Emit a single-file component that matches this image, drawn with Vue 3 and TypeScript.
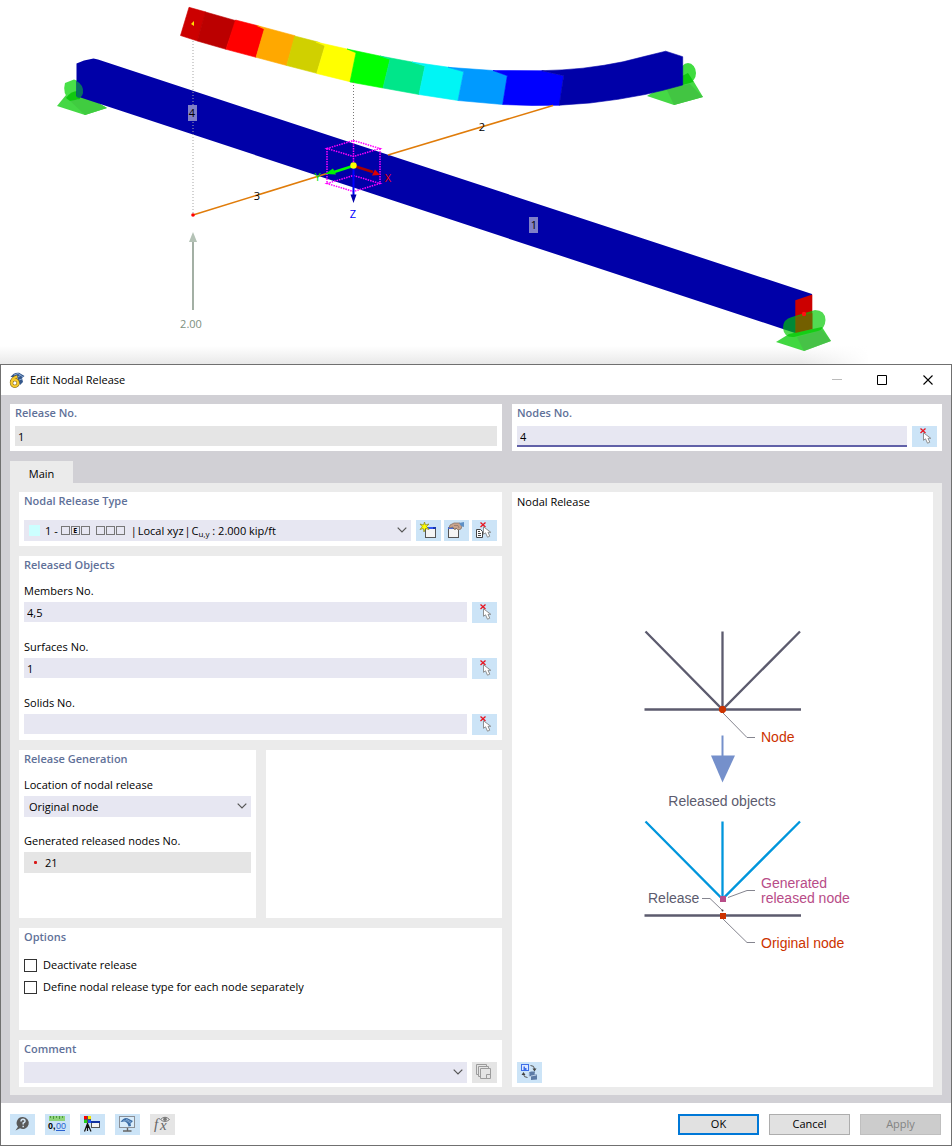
<script setup lang="ts">
import { ref } from 'vue'

interface ObjectField {
  id: string
  label: string
  value: string
}

interface Option {
  id: string
  label: string
  checked: boolean
}

interface BeamSegment {
  color: string
  points: string
}

const releaseNo = ref('1')
const nodesNo = ref('4')
const generatedNo = ref('21')

const objectFields = ref<ObjectField[]>([
  { id: 'members', label: 'Members No.', value: '4,5' },
  { id: 'surfaces', label: 'Surfaces No.', value: '1' },
  { id: 'solids', label: 'Solids No.', value: '' },
])

const options = ref<Option[]>([
  { id: 'deactivate', label: 'Deactivate release', checked: false },
  { id: 'separate', label: 'Define nodal release type for each node separately', checked: false },
])

const segments: BeamSegment[] = [
  { color: '#cc0000', points: '189,7.3 206,12 197.5,41 180.5,35.5' },
  { color: '#bb0000', points: '205.5,12 236,20.7 226,49.3 197.3,41' },
  { color: '#ff0000', points: '235.5,20 257,25.5 264.5,29 256,57.3 226,49.3' },
  { color: '#ffa800', points: '257,25.5 295,35.7 295,37 286.7,65.5 256,57.3 264.3,29' },
  { color: '#d0d000', points: '294.7,36 318,42 325,45.7 316.7,73.3 286.7,65.5' },
  { color: '#ffff00', points: '316,42 347,49 356,52.7 350,81.7 316.7,73.5 325,45.7' },
  { color: '#00ff00', points: '347,49 380,56 390,59.3 383,88 350,82 356,52.7' },
  { color: '#00e68a', points: '380,56 412,62 425,66 419,94.5 383,88 390,59.3' },
  { color: '#00f5f5', points: '412,62 449,67.3 463.7,71.7 458,100.5 419,94.5 425,66' },
  { color: '#009aff', points: '448,67.3 493,70.5 507.3,75.7 502.7,104.5 458,100.5 463.7,71.7' },
  { color: '#0000ff', points: '493,70.5 541.7,70.7 563.7,75.7 559.5,105.3 532,105.5 502.7,104.5 507.3,75.7' },
  {
    color: '#0000a8',
    points: '541.7,70.7 562,69.9 583,68.2 604,65.3 623,61.8 645,56.3 665.7,51.2 682.7,56.7 682.7,85 663,90.3 645,94.5 618,99.3 590,103 559.3,105.2 563.7,75.7',
  },
]
</script>

<template>
  <main class="screen">
    <svg class="scene" viewBox="0 0 952 364" role="img" aria-label="Deformed beam model">
      <defs>
        <linearGradient id="shade" x1="0" y1="0" x2="0" y2="1">
          <stop offset="0" stop-color="#fff" />
          <stop offset="1" stop-color="#e9e9e9" />
        </linearGradient>
        <linearGradient id="shadeEdge" x1="0" y1="0" x2="1" y2="0">
          <stop offset="0" stop-color="#fff" stop-opacity="0" />
          <stop offset="1" stop-color="#fff" />
        </linearGradient>
      </defs>
      <rect x="0" y="346" width="868" height="18" fill="url(#shade)" />
      <rect x="800" y="346" width="70" height="18" fill="url(#shadeEdge)" />

      <g>
        <path d="M57 106 66 95 80 92 107 108 85 115Z" fill="#45d845" />
        <path d="M66 97 80 92 107 108 85 115Z" fill="#40cc40" />
        <path d="M65 83 74 79.500 78 81V100L70 100Q62 94 65 83Z" fill="#48e048" />
        <path d="M66 98Q71 90 80 91V99L70 101Z" fill="#10c810" />
      </g>
      <g>
        <path d="M647 96 666 84 694 82 703 97 674 105Z" fill="#45d845" />
        <path d="M666 88 690 84 703 97 674 105Z" fill="#42c542" />
        <ellipse cx="688" cy="73" rx="8" ry="10" fill="#40dc40" />
        <path d="M682 76 688 73 694 82 682 85Z" fill="#0fc80f" />
      </g>

      <polygon points="76.500,63.500 84,60.500 93.500,58.500 98,59.500 812,294 812,325 795,333 783,329 82,98 76.500,96" fill="#0000a8" />
      <path d="M76.500 81Q84 85 83 93 82 97 79 98L76.500 97Z" fill="#087060" />
      <g stroke-width=".6" stroke-linejoin="round">
        <polygon
          v-for="segment in segments"
          :key="segment.color"
          :points="segment.points"
          :fill="segment.color"
          :stroke="segment.color"
        />
      </g>
      <path d="M191 24 194 21V26Z" fill="#ffdf00" />

      <polygon points="795.300,300.300 812.300,294.500 812.300,329 795.300,333" fill="#cc0000" />
      <g>
        <path d="M776 342 789 334 822 327 831 341 804 351Z" fill="#22d022" fill-opacity=".86" />
        <path d="M797 337 822 330 831 341 804 351Z" fill="#4abb4a" fill-opacity=".75" />
        <path d="M783 328Q783 319 792 317L815 310Q825 310 825.500 320 825 329 818 331L794 337Q784 338 783 328Z" fill="#00c800" fill-opacity=".68" />
        <path d="M795.500 317 812.500 313V329L795.500 333Z" fill="#954400" fill-opacity=".6" />
      </g>
      <circle cx="804" cy="314" r="2.200" fill="#ff1010" />

      <g class="dots">
        <path d="M193 41V215" stroke="#a5a5a5" />
        <path d="M353.500 82V141" stroke="#777" />
      </g>
      <g stroke="#e07c0a" stroke-width="1.600">
        <path d="M388 155 553 105.500" />
        <path d="M193 215 327 173.500" />
      </g>
      <circle cx="193" cy="215" r="1.800" fill="#f00" />

      <g class="box">
        <path d="M327 148.500 353.500 140.500 380 148.500 353.500 156.500ZM327 183.500 353.500 175.500 380 183.500 353.500 191.500Z" />
        <path d="M327 148.500V183.500M380 148.500V183.500M353.500 140.500V162" />
      </g>
      <g>
        <path d="M353 166 334 172" stroke="#0f0" stroke-width="2.500" />
        <path d="M325 174 333 168.500 336 174.500Z" fill="#00f000" />
        <path d="M354 166 373 172" stroke="#a80000" stroke-width="2.500" />
        <path d="M380 175 372 175.500 375 169.500Z" fill="#e00000" />
        <path d="M353.500 167V196" stroke="#0000ff" stroke-width="2" />
        <path d="M350.500 194.500H356.500L353.500 203Z" fill="#0000a8" />
        <circle cx="353.500" cy="165.500" r="3.200" fill="#ff0" />
      </g>
      <g class="scene-text" text-anchor="middle">
        <text x="317.500" y="181" fill="#00e000">Y</text>
        <text x="388" y="182" fill="#f00000">X</text>
        <text x="353" y="218" fill="#0000ff">Z</text>
        <rect x="188" y="105" width="9" height="16" fill="#8080c8" />
        <text x="192" y="117">4</text>
        <rect x="529" y="217" width="9" height="16" fill="#8080c8" />
        <text x="534" y="229">1</text>
        <text x="482" y="131">2</text>
        <text x="257" y="200">3</text>
        <text x="191" y="328" fill="#7d9080">2.00</text>
      </g>
      <path d="M193 310V240" stroke="#8c9c8e" stroke-width="1.600" />
      <path d="M189 242 193 232 197 242Z" fill="#b4c2b6" />
    </svg>

    <section class="dialog" role="dialog" aria-labelledby="dialog-title">
      <header class="titlebar">
        <svg width="16" height="16" viewBox="0 0 16 16" aria-hidden="true">
          <path d="M1.500 5Q5 0 10 .8L15.500 4 13 6 14 10 11 13 8 5Z" fill="#35588c" />
          <path d="M5 3 9 1.500 14 5M9 5 12 3M10 8 13 7" stroke="#86a5ce" fill="none" />
          <path d="M8.300 4.600Q3 5.800 2.400 10.800" fill="none" stroke="#7d651a" stroke-width="3.400" />
          <circle cx="5.800" cy="11" r="3.300" fill="none" stroke="#7d651a" stroke-width="3.200" />
          <path d="M8.300 4.600Q3 5.800 2.400 10.800" fill="none" stroke="#f6c92c" stroke-width="2" />
          <circle cx="5.800" cy="11" r="3.300" fill="none" stroke="#f6c92c" stroke-width="2.200" />
        </svg>
        <h1 id="dialog-title">Edit Nodal Release</h1>
        <div class="window-buttons">
          <button type="button" aria-label="Minimize" disabled>
            <svg width="11" height="11" viewBox="0 0 11 11"><path d="M1 4.500H11" stroke="#bbb" /></svg>
          </button>
          <button type="button" aria-label="Maximize">
            <svg width="11" height="11" viewBox="0 0 11 11"><path d="M.5.5H9.500V9.500H.5Z" fill="none" stroke="#000" /></svg>
          </button>
          <button type="button" aria-label="Close">
            <svg width="11" height="11" viewBox="0 0 11 11"><path d="M.5.5 9.500 9.500M9.500 .5.5 9.500" stroke="#000" stroke-width="1.100" /></svg>
          </button>
        </div>
      </header>

      <svg class="symbols" aria-hidden="true">
        <symbol id="pick" viewBox="0 0 25 21">
          <path d="M8.500 2.500 13.500 7M13.500 2.500 8.500 7" stroke="#e81420" stroke-width="1.300" />
          <path d="M11.500 6.800V14.300L13.500 12.800 15.500 17.200 17.800 16.200 16 12.300H18.800Z" fill="#fff" stroke="#858585" stroke-width=".9" />
        </symbol>
        <symbol id="chevron" viewBox="0 0 10 6">
          <path d="M.7.7 5 5 9.300.7" fill="none" stroke="#555" stroke-width="1.200" />
        </symbol>
      </svg>

      <div class="body">
        <div class="top-row">
          <section class="panel head-panel">
            <h2><label for="release-no">Release No.</label></h2>
            <div class="row"><input id="release-no" v-model="releaseNo" class="field readonly" readonly /></div>
          </section>
          <section class="panel head-panel">
            <h2><label for="nodes-no">Nodes No.</label></h2>
            <div class="row">
              <input id="nodes-no" v-model="nodesNo" class="field active" />
              <button type="button" class="tool" aria-label="Select nodes"><svg><use href="#pick" /></svg></button>
            </div>
          </section>
        </div>

        <div class="tabs" role="tablist">
          <button type="button" role="tab" aria-selected="true" class="tab">Main</button>
        </div>

        <div class="page" role="tabpanel">
          <div class="column">
            <section class="panel type-panel">
              <h2><label for="release-type">Nodal Release Type</label></h2>
              <div class="row">
                <div class="combo">
                  <select id="release-type" class="rich">
                    <option>1 - □E□ □□□ | Local xyz | Cu,y : 2.000 kip/ft</option>
                  </select>
                  <div class="rich-value" aria-hidden="true">
                    <i class="swatch"></i>
                    <span>1 -</span>
                    <span class="glyphs"><i></i><i>E</i><i></i></span>
                    <span class="glyphs"><i></i><i></i><i></i></span>
                    <span class="parts">
                      <span>|</span><span>Local xyz</span><span>|</span>
                      <span>C<sub>u,y</sub> : 2.000 kip/ft</span>
                    </span>
                  </div>
                  <svg class="chevron"><use href="#chevron" /></svg>
                </div>
                <div class="tool-group">
                  <button type="button" class="tool" aria-label="New release type">
                    <svg viewBox="0 0 25 21">
                      <rect x="9.500" y="8.500" width="10" height="9" fill="#f4f4f4" stroke="#555" />
                      <path d="M9 8H20" stroke="#1638b0" stroke-width="2" />
                      <path d="M12 8H17" stroke="#3157f0" stroke-width="2" />
                      <path d="M8.500 2 9.500 5 13 4 10.500 6.500 13 9.500 9.500 8.500 8 12 7.300 8.500 4 9.500 6.300 6.700 4 4 7.500 5Z" fill="#ff0" stroke="#89871c" stroke-width=".7" />
                    </svg>
                  </button>
                  <button type="button" class="tool" aria-label="Edit release type">
                    <svg viewBox="0 0 25 21">
                      <rect x="4.500" y="8.500" width="10" height="9" fill="#f4f4f4" stroke="#555" />
                      <path d="M4 8H9" stroke="#456ce0" stroke-width="2" />
                      <path d="M6 5 10 3 16 3 18 6 17 9 14 10 12 8 11 10 9 7 5 8Z" fill="#c9a38c" stroke="#806d62" stroke-width=".7" />
                      <path d="M10 5.500 14 5.500 15 8" fill="none" stroke="#8b7468" stroke-width=".7" />
                      <path d="M15 3 20 2V7L17 6Z" fill="#5e90c5" />
                    </svg>
                  </button>
                  <button type="button" class="tool" aria-label="Select release type">
                    <svg viewBox="0 0 25 21">
                      <path d="M4.500 9.500H8.500L10.500 11.500V17.500H4.500Z" fill="#fff" stroke="#444" />
                      <path d="M6 11.500H8M6 13.500H9M6 15.500H9" stroke="#444" />
                      <use href="#pick" width="25" height="21" />
                    </svg>
                  </button>
                </div>
              </div>
            </section>

            <section class="panel objects-panel">
              <h2>Released Objects</h2>
              <div v-for="item in objectFields" :key="item.id" class="labelled">
                <label :for="item.id">{{ item.label }}</label>
                <div class="row">
                  <input :id="item.id" v-model="item.value" class="field" />
                  <button type="button" class="tool" :aria-label="`Select ${item.id}`"><svg><use href="#pick" /></svg></button>
                </div>
              </div>
            </section>

            <div class="split">
              <section class="panel generation-panel">
                <h2>Release Generation</h2>
                <div class="labelled">
                  <label for="location">Location of nodal release</label>
                  <div class="combo">
                    <select id="location"><option>Original node</option></select>
                    <svg class="chevron"><use href="#chevron" /></svg>
                  </div>
                </div>
                <div class="labelled">
                  <label for="generated">Generated released nodes No.</label>
                  <div class="marked">
                    <i class="marker"></i>
                    <input id="generated" v-model="generatedNo" readonly />
                  </div>
                </div>
              </section>
              <section class="panel"></section>
            </div>

            <section class="panel options-panel">
              <h2>Options</h2>
              <div class="checks">
                <label v-for="option in options" :key="option.id" class="check">
                  <input v-model="option.checked" type="checkbox" />{{ option.label }}
                </label>
              </div>
            </section>

            <section class="panel comment-panel">
              <h2><label for="comment">Comment</label></h2>
              <div class="row">
                <div class="combo">
                  <select id="comment"><option></option></select>
                  <svg class="chevron"><use href="#chevron" /></svg>
                </div>
                <button type="button" class="tool muted" aria-label="Comment library">
                  <svg viewBox="0 0 25 21" fill="#e5e5e5" stroke="#9c9c9c">
                    <path d="M4.500 2.500H14.500V12.500H4.500Z" />
                    <path d="M6.500 4.500H16.500V14.500H6.500Z" />
                    <path d="M8.500 6.500H18.500V16.500H8.500Z" />
                    <path d="M14.500 16V12.500H18" />
                  </svg>
                </button>
              </div>
            </section>
          </div>

          <section class="panel preview">
            <h3>Nodal Release</h3>
            <svg class="diagram" viewBox="0 0 260 330" role="img" aria-label="Nodal release scheme">
              <g fill="none" stroke="#5c5b6e" stroke-width="2.300">
                <path d="M52.500 9.500 129.500 87.500 207 9.500M129.500 9.500V87.500M51.500 87.500H208M51.500 293.500H208" />
                <path d="M52.500 199.500 129.500 277 207 199.500M129.500 199.500V277" stroke="#0096dc" />
              </g>
              <g fill="none" stroke="#85858f">
                <path d="M130 91 154 115.500H162M135 275.500 154 268.500H162M109 276.500H117L129 288M130 297 154 320.500H162" />
              </g>
              <path d="M128 84H131L133 86V89L131 91H128L126 89V86Z" fill="#cc3300" />
              <path d="M129.500 113.500V134" stroke="#7590cb" stroke-width="2" />
              <path d="M118 133.500H142L129.500 160.500Z" fill="#7590cb" />
              <rect x="127" y="274" width="6" height="6" fill="#b84c88" />
              <rect x="127" y="291" width="6" height="6" fill="#cc3300" />
              <circle cx="129.500" cy="288.500" r="1" fill="#444" />
              <g class="diagram-text">
                <text x="168" y="120" class="node">Node</text>
                <text x="129" y="184" text-anchor="middle">Released objects</text>
                <text x="168" y="266" class="generated">Generated</text>
                <text x="168" y="281" class="generated">released node</text>
                <text x="55" y="281">Release</text>
                <text x="168" y="326" class="node">Original node</text>
              </g>
            </svg>
            <button type="button" class="tool" aria-label="Switch view">
              <svg viewBox="0 0 25 21">
                <rect x="4.500" y="2.500" width="7" height="6" fill="#dce8ff" stroke="#3f6fe8" />
                <path d="M6.500 8V4.500H8V6H9.500V8Z" fill="#3f6fe8" />
                <path d="M13.500 3.500Q17.500 3.500 17.500 7M10.500 15.500Q6.500 15.500 6.500 12" fill="none" stroke="#555" />
                <path d="M15.500 6.500H19.500L17.500 9.500ZM4.500 13H8.500L6.500 10Z" fill="#444" />
                <path d="M12 10.500 14 9.500H18L17.500 12.500H20V17.500L14 18V14.500H12Z" fill="#5c7ba6" />
                <path d="M12 11V14.500H14M14 14 19.500 13" fill="none" stroke="#b9cde4" />
              </svg>
            </button>
          </section>
        </div>
      </div>

      <footer class="footer">
        <div class="footer-tools">
          <button type="button" class="tool" aria-label="Help">
            <svg viewBox="0 0 25 21">
              <path d="M13 3A6 6 0 1 1 10 14.300L5.500 16.500 8 12.800A6 6 0 0 1 13 3Z" fill="#5a5a5a" />
              <path d="M11 7.500Q11 5.300 13 5.300 15.200 5.400 15 7.300 14.800 8.400 13.200 9V10.500M13.200 11.700V13.300" fill="none" stroke="#d5e7f5" stroke-width="1.500" />
            </svg>
          </button>
          <button type="button" class="tool" aria-label="Units and decimal places">
            <svg viewBox="0 0 25 21">
              <rect x="4" y="2" width="16" height="5" fill="#8fd47c" />
              <path d="M5.500 2V4M8.500 2V5M11.500 2V4M14.500 2V5M17.500 2V4" stroke="#4d9a40" />
              <text x="3" y="15" class="digits">0,</text>
              <text x="11" y="15" class="digits blue">00</text>
              <path d="M11 16.500H20" stroke="#2a62d0" />
            </svg>
          </button>
          <button type="button" class="tool" aria-label="Display properties">
            <svg viewBox="0 0 25 21">
              <path d="M4 2H11V9H4Z" fill="#555" />
              <path d="M4 2H7V5H4Z" fill="#f00" />
              <path d="M8 2H11V5H8Z" fill="#f4e400" />
              <path d="M4 6H7V9H4Z" fill="#20d020" />
              <path d="M8 6H11V9H8Z" fill="#2050f0" />
              <path d="M7.500 9.500 4.500 17.500M7.500 9.500 11 17.500M7.500 9V17M5.500 13.500H9.500" stroke="#111" stroke-width="1.200" fill="none" />
              <rect x="11.500" y="7.500" width="8" height="6" fill="#f3f3f3" stroke="#555" />
              <path d="M11 8H20" stroke="#1232a0" stroke-width="2" />
            </svg>
          </button>
          <button type="button" class="tool" aria-label="Rendering">
            <svg viewBox="0 0 25 21">
              <rect x="4.500" y="2.500" width="15" height="11" fill="#d8ecfb" stroke="#8a8f96" />
              <path d="M5.500 8Q9 3 12.500 4.200L18 7 15.500 9.500 16 12 13.500 12.500Q13 8.500 9.500 7.500Z" fill="#3b6ca5" />
              <path d="M8 7Q12 5.500 15.500 9M11 5 16 8" fill="none" stroke="#91b5dc" stroke-width=".8" />
              <path d="M12.500 14V16.500M8 17H16.500" stroke="#666" stroke-width="1.400" />
            </svg>
          </button>
          <button type="button" class="tool muted" aria-label="Formula">
            <svg viewBox="0 0 25 21">
              <text x="4" y="15" class="formula">f</text>
              <text x="10" y="16" class="formula">x</text>
              <path d="M10.500 5.500Q15 1 19.500 5.500 15 9.500 10.500 5.500Z" fill="#eee" stroke="#777" />
              <circle cx="15" cy="5.300" r="1.800" fill="#777" />
            </svg>
          </button>
        </div>
        <div class="actions">
          <button type="button" class="action primary">OK</button>
          <button type="button" class="action">Cancel</button>
          <button type="button" class="action" disabled>Apply</button>
        </div>
      </footer>
    </section>
  </main>
</template>

<style>
body {
  background: #fff;
}
</style>

<style scoped>
.screen,
.screen * {
  box-sizing: border-box;
}

.screen {
  color: #000;
  font-family: "Open Sans", "Noto Sans", sans-serif;
  font-size: 11px;
  line-height: 16px;
}

button,
input,
select {
  font: inherit;
  color: inherit;
  margin: 0;
  border: 0;
  border-radius: 0;
  padding: 0;
}

svg {
  display: block;
}

.scene {
  width: 100%;
  height: auto;
}

.scene-text {
  font-size: 11px;
}

.dots {
  stroke-dasharray: 1 2;
}

.box {
  fill: none;
  stroke: #ff00ff;
  stroke-width: 1.5px;
  stroke-dasharray: 1.5px 1px;
}

.dialog {
  border: 1px solid #707070;
  background: #fff;
}

.titlebar {
  display: flex;
  align-items: center;
  gap: 5px;
  height: 30px;
  padding-left: 8px;
}

h1,
h2,
h3 {
  margin: 0;
  font-size: 11px;
  font-weight: 400;
}

h2 {
  height: 18px;
  line-height: 18px;
  color: #5f7199;
  font-weight: 600;
}

.window-buttons {
  display: flex;
  margin-left: auto;
}

.window-buttons button {
  display: grid;
  place-items: center;
  width: 46px;
  height: 28px;
  background: none;
}

.symbols {
  position: absolute;
  width: 0;
  height: 0;
}

.body {
  padding: 9px 9px 8px;
  background: #d1d0d5;
}

.top-row {
  display: grid;
  grid-template-columns: minmax(0, 492fr) minmax(0, 430fr);
  gap: 10px;
}

.panel {
  min-width: 0;
  padding: 0 5px 5px;
  background: #fff;
}

.row {
  display: flex;
  gap: 5px;
}

.head-panel .row {
  margin-top: 4px;
  height: 21px;
}

.head-panel {
  padding-bottom: 4px;
}

.field {
  flex: 1;
  min-width: 0;
  height: 20px;
  padding: 0 3px;
  background: #e7e7f2;
  outline: 0;
}

.field.readonly {
  background: #e5e5e5;
}

.field.active {
  height: 21px;
  padding-top: 2px;
  border-bottom: 2px solid #6161a8;
}

.tool {
  flex: none;
  width: 25px;
  height: 21px;
  background: #cce4f7;
}

.tool svg {
  width: 25px;
  height: 21px;
}

.tool.muted {
  background: #e5e5e5;
}

.tool-group {
  display: flex;
  gap: 3px;
}

.tabs {
  display: flex;
  margin-top: 10px;
}

.tab {
  width: 63px;
  height: 22px;
  padding-top: 4px;
  background: #ebebeb;
}

.page {
  display: grid;
  grid-template-columns: minmax(0, 483fr) minmax(0, 421fr);
  gap: 10px;
  padding: 9px 9px 8px;
  background: #ebebeb;
}

.column {
  display: flex;
  flex-direction: column;
  gap: 10px;
}

.type-panel .row {
  margin-top: 10px;
}

.combo {
  position: relative;
  flex: 1;
  min-width: 0;
  height: 21px;
}

.combo select {
  display: block;
  width: 100%;
  height: 21px;
  padding: 1px 24px 0 5px;
  background: #e7e7f2;
  appearance: none;
  outline: 0;
}

.combo select.rich {
  color: transparent;
}

.rich-value {
  position: absolute;
  inset: 0 24px 0 5px;
  display: flex;
  align-items: center;
  gap: 3px;
  overflow: hidden;
  line-height: 21px;
  white-space: nowrap;
  pointer-events: none;
}

.rich-value sub {
  font-size: 8px;
  line-height: 1;
  vertical-align: -2px;
}

.parts {
  display: flex;
  gap: 1px;
}

.swatch {
  width: 11px;
  height: 11px;
  margin-right: 2px;
  background: #ccffff;
}

.glyphs {
  display: flex;
  margin-right: 2px;
}

.glyphs i {
  width: 9px;
  height: 9px;
  margin-right: 1px;
  border: 1px solid #777;
  font-size: 7px;
  font-style: normal;
  font-weight: 700;
  line-height: 7px;
  text-align: center;
}

.chevron {
  position: absolute;
  top: 7px;
  right: 4px;
  width: 10px;
  height: 6px;
  pointer-events: none;
}

.labelled {
  padding-bottom: 16px;
}

.labelled > label {
  display: block;
  margin-bottom: 3px;
}

.objects-panel h2,
.generation-panel h2 {
  margin-bottom: 9px;
}

.objects-panel .labelled:last-child {
  padding-bottom: 0;
}

.split {
  display: grid;
  grid-template-columns: minmax(0, 1fr) minmax(0, 1fr);
  gap: 10px;
}

.generation-panel {
  padding-bottom: 29px;
}

.marked {
  display: flex;
  align-items: center;
  gap: 8px;
  height: 21px;
  padding-left: 10px;
  background: #e5e5e5;
}

.marked input {
  flex: 1;
  min-width: 0;
  height: 21px;
  background: none;
  outline: 0;
}

.marker {
  width: 3px;
  height: 3px;
  border-radius: 1px;
  background: #d81818;
}

.options-panel {
  padding-bottom: 32px;
}

.checks {
  display: flex;
  flex-direction: column;
  padding-top: 8px;
}

.check {
  display: flex;
  align-items: center;
  gap: 6px;
  height: 22px;
}

.check input {
  width: 13px;
  height: 13px;
  border: 1px solid #333;
  background: #fff;
  appearance: none;
}

.check input:checked {
  background: #333;
}

.comment-panel {
  padding-bottom: 4px;
}

.comment-panel .row {
  margin-top: 4px;
}

.preview {
  display: flex;
  flex-direction: column;
  padding-bottom: 4px;
}

.preview h3 {
  line-height: 20px;
}

.diagram {
  width: 260px;
  max-width: 100%;
  height: 330px;
  margin: auto;
}

.diagram-text {
  fill: #5c5b6e;
  font-family: "Liberation Sans", Arial, sans-serif;
  font-size: 14px;
}

.diagram-text .node {
  fill: #cc3300;
}

.diagram-text .generated {
  fill: #b84c88;
}

.footer {
  display: flex;
  align-items: center;
  justify-content: space-between;
  height: 42px;
  padding: 0 10px 0 9px;
}

.footer-tools,
.actions {
  display: flex;
  gap: 10px;
}

.digits {
  font-family: "Liberation Sans", Arial, sans-serif;
  font-size: 9px;
  font-weight: 700;
}

.digits.blue {
  fill: #2a62d0;
  font-weight: 400;
}

.formula {
  fill: #666;
  font-family: "Liberation Serif", serif;
  font-size: 15px;
  font-style: italic;
}

.action {
  width: 81px;
  height: 21px;
  border: 1px solid #adadad;
  background: #e1e1e1;
}

.action.primary {
  border: 2px solid #0078d7;
}

.action:disabled {
  border-color: #bfbfbf;
  background: #cccccc;
  color: #838383;
}
</style>
